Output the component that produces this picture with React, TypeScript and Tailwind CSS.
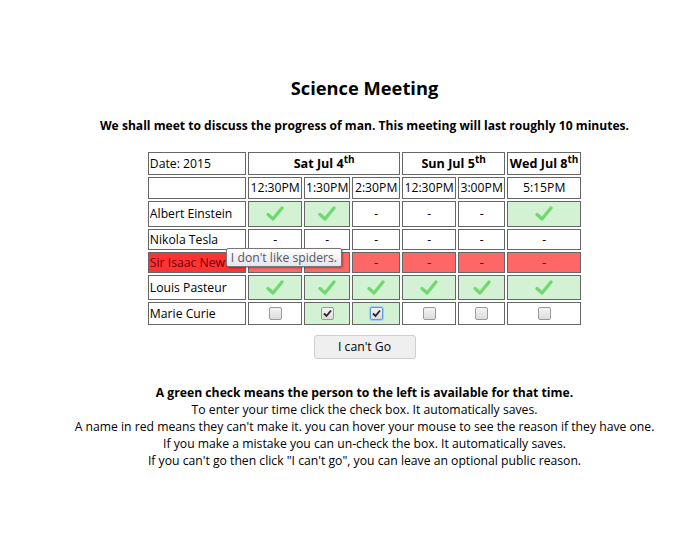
import type { ReactNode } from 'react'

type Mark = 'yes' | 'no' | 'box' | 'boxOn' | 'boxFocus'

interface Person {
  name: string
  cannotGo?: boolean
  marks: Mark[]
  height: string
}

const FONT = { fontFamily: '"Open Sans", "Noto Sans", sans-serif' }

const PEOPLE: Person[] = [
  { name: 'Albert Einstein', marks: ['yes', 'yes', 'no', 'no', 'no', 'yes'], height: 'h-[26px]' },
  { name: 'Nikola Tesla', marks: ['no', 'no', 'no', 'no', 'no', 'no'], height: 'h-[21px]' },
  { name: 'Sir Isaac Newton', cannotGo: true, marks: ['no', 'no', 'no', 'no', 'no', 'no'], height: 'h-[21px]' },
  { name: 'Louis Pasteur', marks: ['yes', 'yes', 'yes', 'yes', 'yes', 'yes'], height: 'h-[25px]' },
  { name: 'Marie Curie', marks: ['box', 'boxOn', 'boxFocus', 'box', 'box', 'box'], height: 'h-[23px]' },
]

const TIMES = ['12:30PM', '1:30PM', '2:30PM', '12:30PM', '3:00PM', '5:15PM']

function Check() {
  return (
    <svg width="18" height="16" viewBox="0 0 18 16" className="mx-auto block">
      <path d="M2 8.5 L7 13 L16 2" fill="none" stroke="#6fd86f" strokeWidth="3.2" strokeLinecap="round" strokeLinejoin="round" />
    </svg>
  )
}

function Box({ on, focus }: { on?: boolean; focus?: boolean }) {
  return (
    <span
      className={`mx-auto flex h-[13px] w-[13px] items-center justify-center rounded-[2px] border bg-gradient-to-b from-[#f4f4f4] to-[#dcdcdc] ${
        focus ? 'border-[#5a9be0] ring-1 ring-[#a8cdf2]' : 'border-[#9a9a9a]'
      }`}
    >
      {on && (
        <svg width="9" height="9" viewBox="0 0 9 9">
          <path d="M1 4.5 L3.5 7 L8 1.5" fill="none" stroke="#222" strokeWidth="1.8" />
        </svg>
      )}
    </span>
  )
}

function Cell({ mark, red }: { mark: Mark; red?: boolean }) {
  const green = mark === 'yes' || mark === 'boxOn' || mark === 'boxFocus'
  const bg = red ? 'bg-[#ff6666]' : green ? 'bg-[#d3f1d3]' : 'bg-white'
  let inner: ReactNode = '-'
  if (mark === 'yes') inner = <Check />
  if (mark === 'box') inner = <Box />
  if (mark === 'boxOn') inner = <Box on />
  if (mark === 'boxFocus') inner = <Box on focus />
  return <td className={`border border-[#666] p-0 text-center ${bg}`}>{inner}</td>
}

function Day({ label, n, span }: { label: string; n: string; span: number }) {
  return (
    <td colSpan={span} className="border border-[#666] p-0 text-center text-[12.6px] font-bold">
      {label} {n}
      <sup className="text-[10px]">th</sup>
    </td>
  )
}

export default function App() {
  return (
    <div className="min-h-[550px] w-[700px] bg-white pl-[29px] text-[12.2px] text-black" style={FONT}>
      <div className="flex flex-col items-center">
        <h1 className="mt-[76px] text-[18.3px] font-bold leading-[24px]">Science Meeting</h1>
        <p className="mt-[17px] text-[12.1px] font-bold leading-[17px]">
          We shall meet to discuss the progress of man. This meeting will last roughly 10 minutes.
        </p>

        <table className="mt-[16px] table-fixed border-separate border-spacing-[2px] text-[12.2px] leading-[16px]">
          <colgroup>
            <col className="w-[96px]" />
            <col className="w-[54px]" />
            <col className="w-[46px]" />
            <col className="w-[48px]" />
            <col className="w-[54px]" />
            <col className="w-[47px]" />
            <col className="w-[74px]" />
          </colgroup>
          <tbody>
            <tr className="h-[23px]">
              <td className="border border-[#666] px-[1px] py-0">Date: 2015</td>
              <Day label="Sat Jul" n="4" span={3} />
              <Day label="Sun Jul" n="5" span={2} />
              <Day label="Wed Jul" n="8" span={1} />
            </tr>
            <tr className="h-[22px]">
              <td className="border border-[#666] p-0" />
              {TIMES.map((t, i) => (
                <td key={i} className="whitespace-nowrap border border-[#666] p-0 text-center">
                  {t}
                </td>
              ))}
            </tr>
            {PEOPLE.map(p => (
              <tr key={p.name} className={p.height}>
                <td
                  className={`whitespace-nowrap border border-[#666] px-[1px] py-0 ${
                    p.cannotGo ? 'relative bg-[#ff3333] text-[#6e0000]' : ''
                  }`}
                >
                  <span className="block overflow-hidden">{p.name}</span>
                  {p.cannotGo && (
                    <span className="absolute left-[77px] top-[-5px] z-10 whitespace-nowrap rounded-[2px] border border-[#767676] bg-gradient-to-b from-white to-[#e4e5ee] px-[4px] text-[12.2px] leading-[17px] text-[#575757] shadow-[1px_1px_2px_rgba(0,0,0,0.35)]">
                      I don't like spiders.
                    </span>
                  )}
                </td>
                {p.marks.map((m, i) => (
                  <Cell key={i} mark={m} red={p.cannotGo} />
                ))}
              </tr>
            ))}
          </tbody>
        </table>

        <button className="mt-[8px] h-[24px] w-[102px] rounded-[3px] border border-[#cfcfcf] bg-[#efefef] text-[12.2px] leading-[20px] text-black">
          I can't Go
        </button>

        <div className="mt-[25px] text-center text-[12.2px] leading-[17px]">
          <p className="font-bold">A green check means the person to the left is available for that time.</p>
          <p>To enter your time click the check box. It automatically saves.</p>
          <p>A name in red means they can't make it. you can hover your mouse to see the reason if they have one.</p>
          <p>If you make a mistake you can un-check the box. It automatically saves.</p>
          <p>If you can't go then click "I can't go", you can leave an optional public reason.</p>
        </div>
      </div>
    </div>
  )
}
